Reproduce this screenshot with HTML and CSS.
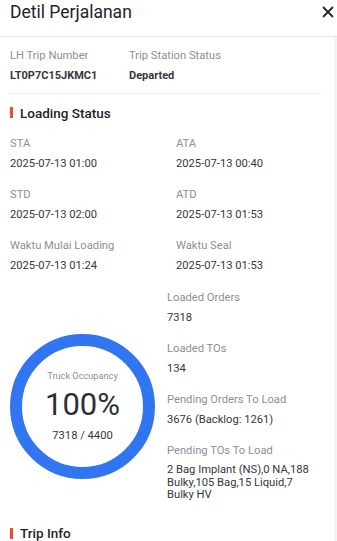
FILE: index.html
```html
<!DOCTYPE html>
<html>
<head>
    <meta content="text/html; charset=utf-8" http-equiv="Content-Type">
    <meta content="width=device-width, initial-scale=1" name="viewport">
    <link rel="stylesheet" href="styles.css">
    <title>Detil Perjalanan</title>
</head>
<body>
    <div class="header">
        <div class="title">Detil Perjalanan</div>
        <svg class="close" width="12" height="12" viewBox="0 0 12 12">
            <path d="M1 1L11 11M11 1L1 11" stroke="#1f2329" stroke-width="1.8" fill="none"/>
        </svg>
    </div>
    <div class="content">
        <div class="trip-top">
            <div class="field">
                <div class="label">LH Trip Number</div>
                <div class="value bold">LT0P7C15JKMC1</div>
            </div>
            <div class="field">
                <div class="label">Trip Station Status</div>
                <div class="value bold">Departed</div>
            </div>
        </div>

        <div class="section-title"><span class="bar"></span>Loading Status</div>
        <div class="grid">
            <div class="field">
                <div class="label">STA</div>
                <div class="value">2025-07-13 01:00</div>
            </div>
            <div class="field">
                <div class="label">ATA</div>
                <div class="value">2025-07-13 00:40</div>
            </div>
            <div class="field">
                <div class="label">STD</div>
                <div class="value">2025-07-13 02:00</div>
            </div>
            <div class="field">
                <div class="label">ATD</div>
                <div class="value">2025-07-13 01:53</div>
            </div>
            <div class="field">
                <div class="label">Waktu Mulai Loading</div>
                <div class="value">2025-07-13 01:24</div>
            </div>
            <div class="field">
                <div class="label">Waktu Seal</div>
                <div class="value">2025-07-13 01:53</div>
            </div>
        </div>

        <div class="occupancy">
            <div class="ring">
                <div class="ring-label">Truck Occupancy</div>
                <div class="ring-pct">100%</div>
                <div class="ring-count">7318 / 4400</div>
            </div>
            <div class="stats">
                <div class="field">
                    <div class="label">Loaded Orders</div>
                    <div class="value">7318</div>
                </div>
                <div class="field">
                    <div class="label">Loaded TOs</div>
                    <div class="value">134</div>
                </div>
                <div class="field">
                    <div class="label">Pending Orders To Load</div>
                    <div class="value">3676 (Backlog: 1261)</div>
                </div>
                <div class="field">
                    <div class="label">Pending TOs To Load</div>
                    <div class="value wrap">2 Bag Implant (NS),0 NA,188 Bulky,105 Bag,15 Liquid,7 Bulky HV</div>
                </div>
            </div>
        </div>

        <div class="section-title trip-info"><span class="bar"></span>Trip Info</div>
    </div>
</body>
</html>
```

FILE: styles.css
```css
body {
    margin: 0;
    font-family: Roboto, "Liberation Sans", sans-serif;
    color: #333840;
    background: #ffffff;
    overflow: hidden;
}

.header {
    height: 36px;
    display: flex;
    align-items: center;
    justify-content: space-between;
    padding: 0 3px 0 10px;
    border-bottom: 1px solid #e4e6eb;
}

.title {
    font-size: 17.5px;
    color: #1f2329;
    margin-top: -12px;
}

.close {
    margin-top: -12px;
}

.content {
    padding: 0 13px 0 10px;
    border-right: 3px solid #f4f5f7;
}

.trip-top {
    display: flex;
    padding: 12px 0 10px;
    border-bottom: 1px solid #eceef2;
}

.trip-top .field:first-child {
    width: 119px;
}

.label {
    font-size: 11.2px;
    line-height: 14px;
    color: #8a8f99;
}

.value {
    font-size: 11.2px;
    line-height: 14px;
    margin-top: 6px;
    color: #333840;
}

.bold {
    font-weight: 700;
    font-size: 11px;
}

.section-title {
    display: flex;
    align-items: center;
    font-size: 13.5px;
    font-weight: 500;
    color: #1f2329;
    height: 17px;
    margin-top: 10px;
}

.bar {
    width: 3px;
    height: 11px;
    background: #ee4d2d;
    margin-right: 7px;
}

.grid {
    display: grid;
    grid-template-columns: 166px 1fr;
    row-gap: 17px;
    margin-top: 16px;
}

.occupancy {
    display: flex;
    align-items: center;
    margin-top: 18px;
}

.ring {
    width: 121px;
    height: 121px;
    flex: none;
    border: 12px solid #3175f0;
    border-radius: 50%;
    display: flex;
    flex-direction: column;
    align-items: center;
    justify-content: center;
    margin-top: 21px;
}

.ring-label {
    font-size: 9.2px;
    color: #8a8f99;
    margin-top: -2px;
}

.ring-pct {
    font-size: 31px;
    line-height: 38px;
    color: #2b3038;
    margin-top: 5px;
}

.ring-count {
    font-size: 11.2px;
    color: #333840;
    margin-top: 5px;
}

.stats {
    margin-left: 12px;
    padding-right: 4px;
    display: flex;
    flex-direction: column;
    gap: 17px;
}

.wrap {
    line-height: 12.5px;
    margin-top: 6px;
}

.trip-info {
    margin-top: 23px;
}
```
